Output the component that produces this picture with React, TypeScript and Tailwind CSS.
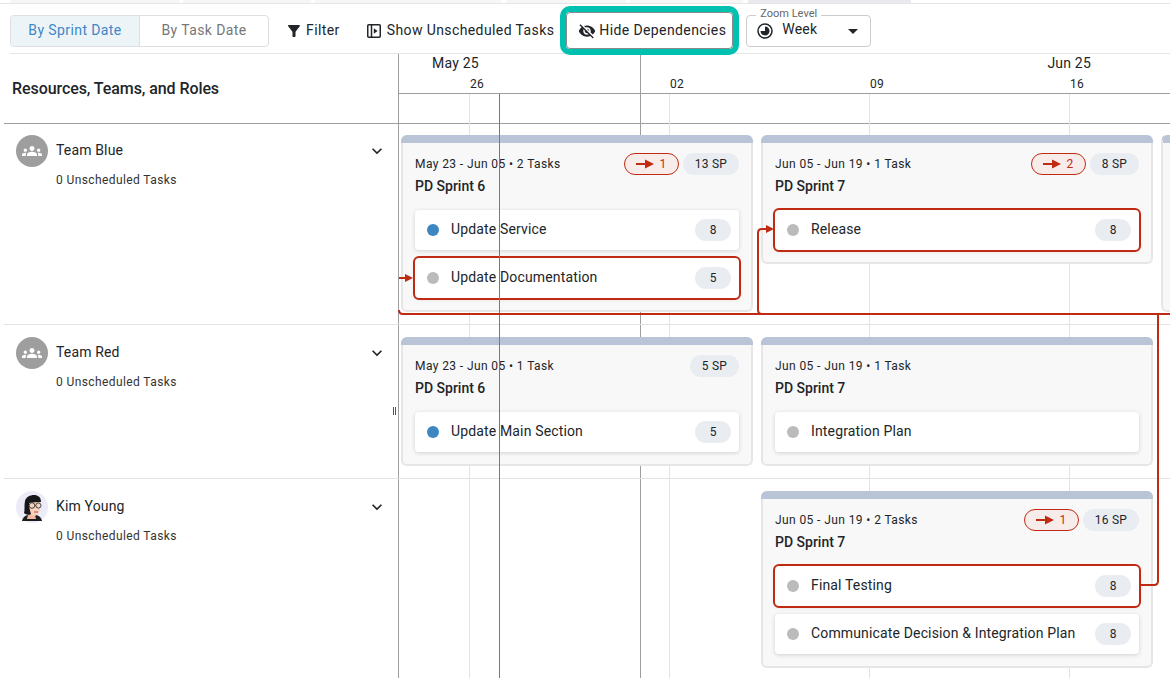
import { MdArrowDropDown, MdExpandMore, MdFilterAlt, MdGroups, MdVisibilityOff } from 'react-icons/md'

type Task = { name: string; points?: number; done?: boolean; linked?: boolean }
type Sprint = { dates: string; name: string; sp?: string; deps?: number; width: string; tasks: Task[] }

function DepArrow() {
    return (
        <svg width="18" height="10" viewBox="0 0 18 10" className="shrink-0">
            <path d="M0 5h10" stroke="#c12a12" strokeWidth="2" />
            <path d="M9 0.500 18 5 9 9.500z" fill="#c12a12" />
        </svg>
    )
}

function SprintCard({ sprint }: { sprint: Sprint }) {
    return (
        <div className={`${sprint.width} shrink-0 rounded-md border-2 border-t-0 border-[#e6e6e6] bg-[#f8f8f8]`}>
            <div className="h-2 -mx-0.5 rounded-t-md bg-[#b9c4d6]" />
            <div className="px-3 pt-2.5 pb-3">
                <div className="flex items-center h-[22px]">
                    <span className="text-xs tracking-[0.4px] text-[#212529]">{sprint.dates}</span>
                    <div className="ml-auto flex gap-1">
                        {sprint.deps && (
                            <span className="flex items-center justify-center gap-[5px] w-[55px] h-[22px] rounded-full border border-[#c12a12] bg-[#f8ecea] text-xs text-[#c12a12]">
                                <DepArrow />
                                {sprint.deps}
                            </span>
                        )}
                        {sprint.sp && (
                            <span className="flex items-center h-[22px] px-3 rounded-full bg-[#e9edf2] text-xs tracking-[0.2px] text-[#212529]">
                                {sprint.sp}
                            </span>
                        )}
                    </div>
                </div>
                <div className="h-5 mt-px mb-[14px] text-sm leading-5 font-medium text-[#212529]">{sprint.name}</div>
                <div className="flex flex-col gap-2">
                    {sprint.tasks.map((t) => (
                        <div
                            key={t.name}
                            className={`flex items-center h-10 pl-3 pr-2 rounded bg-white shadow-[0_1px_4px_rgba(0,0,0,0.16)] ${t.linked ? 'outline-2 outline-[#c12a12]' : ''}`}
                        >
                            <span className={`w-3 h-3 rounded-full ${t.done ? 'bg-[#3c86c2]' : 'bg-[#bbbbbb]'}`} />
                            <span className="ml-3 -mt-0.5 text-sm tracking-[0.15px] text-[#212529]">{t.name}</span>
                            {t.points && (
                                <span className="ml-auto flex items-center justify-center w-9 h-[22px] rounded-full bg-[#e9edf2] text-xs text-[#212529]">
                                    {t.points}
                                </span>
                            )}
                        </div>
                    ))}
                </div>
            </div>
        </div>
    )
}

function TeamAvatar() {
    return (
        <div className="flex items-center justify-center w-8 h-8 rounded-full bg-[#9e9e9e] text-white shrink-0">
            <MdGroups size={20} />
        </div>
    )
}

function KimAvatar() {
    return (
        <svg width="32" height="32" viewBox="0 0 32 32" className="shrink-0">
            <circle cx="16" cy="16" r="16" fill="#ececf8" />
            <path d="M6 32c1-5 6-7 10-7s9 2 10 7z" fill="#1d1d1f" transform="translate(0 -2)" />
            <path d="M12 24h7l1 4h-9z" fill="#eeb9a0" />
            <path d="M11 10h13v8c0 4-3 7-6 7s-7-3-7-7z" fill="#f6d0bb" />
            <path d="M8 22c1-3 0-8 1-12 1-4 5-6 9-6 4 0 7 2 7 7-3 0-9 0-12 1 0 4 1 8 2 11-2 1-5 1-7-1z" fill="#17171a" />
            <circle cx="16" cy="14.500" r="2.800" fill="none" stroke="#444" strokeWidth="1" />
            <circle cx="22.400" cy="14.500" r="2.600" fill="none" stroke="#444" strokeWidth="1" />
            <path d="M18.800 14.500h1" stroke="#444" strokeWidth="1" />
            <path d="M18 21h4" stroke="#b5533f" strokeWidth="1" />
        </svg>
    )
}

function Resource({ name, avatar }: { name: string; avatar: React.ReactNode }) {
    return (
        <div className="flex w-[395px] shrink-0 pl-3 pr-3">
            {avatar}
            <div className="ml-2 flex-1 pt-[5px]">
                <div className="flex items-center justify-between h-5">
                    <span className="text-sm tracking-[0.15px] text-[#212529]">{name}</span>
                    <MdExpandMore size={20} className="text-[#212529] mt-0.5" />
                </div>
                <div className="mt-2.5 text-xs leading-5 tracking-[0.4px] text-[#333]">0 Unscheduled Tasks</div>
            </div>
        </div>
    )
}

const rowOne: Sprint[] = [
    {
        dates: 'May 23 - Jun 05 • 2 Tasks',
        name: 'PD Sprint 6',
        sp: '13 SP',
        deps: 1,
        width: 'w-[352px]',
        tasks: [
            { name: 'Update Service', points: 8, done: true },
            { name: 'Update Documentation', points: 5, linked: true },
        ],
    },
    {
        dates: 'Jun 05 - Jun 19 • 1 Task',
        name: 'PD Sprint 7',
        sp: '8 SP',
        deps: 2,
        width: 'w-[392px]',
        tasks: [{ name: 'Release', points: 8, linked: true }],
    },
]

const rowTwo: Sprint[] = [
    {
        dates: 'May 23 - Jun 05 • 1 Task',
        name: 'PD Sprint 6',
        sp: '5 SP',
        width: 'w-[352px]',
        tasks: [{ name: 'Update Main Section', points: 5, done: true }],
    },
    {
        dates: 'Jun 05 - Jun 19 • 1 Task',
        name: 'PD Sprint 7',
        width: 'w-[392px]',
        tasks: [{ name: 'Integration Plan' }],
    },
]

const rowThree: Sprint = {
    dates: 'Jun 05 - Jun 19 • 2 Tasks',
    name: 'PD Sprint 7',
    sp: '16 SP',
    deps: 1,
    width: 'w-[392px]',
    tasks: [
        { name: 'Final Testing', points: 8, linked: true },
        { name: 'Communicate Decision & Integration Plan', points: 8 },
    ],
}

export default function App() {
    return (
        <div className="relative w-[1170px] h-[678px] overflow-hidden bg-white font-['Roboto',sans-serif] text-[#212529]">
            {/* tab strip cut off by the screenshot */}
            <div className="flex h-1 pl-2.5 border-b border-[#e5e5e5]">
                <div className="w-[170px] bg-[#f6f6f6]" />
                <div className="w-[128px] ml-[3px] bg-[#f6f6f6]" />
                <div className="w-[186px] ml-1 bg-[#f6f6f6]" />
                <div className="w-[120px] ml-[5px] bg-[#f6f6f6]" />
                <div className="w-[113px] ml-1 bg-[#f6f6f6]" />
                <div className="w-[163px] ml-[5px] bg-[#e8eaee]" />
            </div>

            {/* toolbar */}
            <div className="flex items-center h-[50px] pt-1 ml-2.5 border-b border-[#e5e5e5] text-sm tracking-[0.4px]">
                <div className="flex h-8 w-[259px] rounded border border-[#dcdfe3]">
                    <div className="flex items-center justify-center w-[129px] pb-0.5 rounded-l bg-[#edf4f8] border-r border-[#dcdfe3] text-[#3f87c5]">
                        By Sprint Date
                    </div>
                    <div className="flex items-center justify-center flex-1 pb-0.5 text-[#777]">By Task Date</div>
                </div>
                <div className="flex items-center ml-4 gap-[3px]">
                    <MdFilterAlt size={18} />
                    <span className="-mt-0.5">Filter</span>
                </div>
                <div className="flex items-center ml-[27px] gap-1.5">
                    <svg width="14" height="14" viewBox="0 0 14 14">
                        <rect x="0.750" y="0.750" width="12.500" height="12.500" rx="1" fill="none" stroke="#212529" strokeWidth="1.500" />
                        <path d="M4.500 1v12" stroke="#212529" strokeWidth="1.500" />
                        <path d="M6.800 4.200 10.600 7l-3.800 2.800z" fill="#212529" />
                    </svg>
                    <span className="-mt-0.5">Show Unscheduled Tasks</span>
                </div>
                <div className="relative z-30 flex items-center justify-end gap-[3px] pr-1.5 ml-3 w-[167px] h-[37px] -mt-px rounded-sm border border-[#8a8a8a] bg-white outline-[6px] outline-[#00c1b0]">
                    <MdVisibilityOff size={18} className="mt-px" />
                    Hide Dependencies
                </div>
                <div className="relative flex items-center ml-[13px] w-[125px] h-8 pl-2.5 pr-[5px] rounded border border-[#cccccc]">
                    <span className="absolute -top-[9px] left-[9px] px-1 bg-white text-[11px] leading-[14px] tracking-normal text-[#666]">
                        Zoom Level
                    </span>
                    <svg width="16" height="16" viewBox="0 0 16 16">
                        <circle cx="8" cy="8" r="7" fill="none" stroke="#212529" strokeWidth="1.500" />
                        <path d="M8 3.500A4.500 4.500 0 1 1 3.500 8H8z" fill="#212529" />
                    </svg>
                    <span className="ml-[9px] -mt-[3px] tracking-[0.2px]">Week</span>
                    <MdArrowDropDown size={24} className="ml-auto" />
                </div>
            </div>

            {/* column headers */}
            <div className="flex h-[70px] ml-1 border-b border-[#9e9e9e]">
                <div className="flex items-center w-[395px] shrink-0 pl-2 border-r border-[#9e9e9e] text-base font-medium tracking-[-0.08px]">
                    Resources, Teams, and Roles
                </div>
                <div className="w-[771px] h-10 overflow-hidden border-b border-[#9e9e9e]">
                    <div className="flex justify-between pl-[33px] pr-[79px] h-5 -mt-px text-sm leading-5 tracking-[0.2px]">
                        <span>May 25</span>
                        <span>Jun 25</span>
                    </div>
                    <div className="flex pl-[71px] text-xs leading-5 tracking-[0.3px] mt-px">
                        <span className="w-[200px] shrink-0">26</span>
                        <span className="w-[200px] shrink-0">02</span>
                        <span className="w-[200px] shrink-0">09</span>
                        <span className="w-[200px] shrink-0">16</span>
                    </div>
                </div>
            </div>

            {/* grid lines run behind the cards */}
            <div className="absolute left-[469px] top-[94px] bottom-0 w-px bg-[#e3e3e3]" />
            <div className="absolute left-[669px] top-[94px] bottom-0 w-px bg-[#e3e3e3]" />
            <div className="absolute left-[869px] top-[94px] bottom-0 w-px bg-[#e3e3e3]" />
            <div className="absolute left-[1069px] top-[94px] bottom-0 w-px bg-[#e3e3e3]" />
            <div className="absolute left-[640px] top-[54px] bottom-0 w-px bg-[#9e9e9e]" />
            <div className="absolute left-[398px] top-[54px] bottom-0 w-px bg-[#9e9e9e]" />

            {/* rows */}
            <div className="relative ml-1 flex pt-[11px] h-[201px] border-b border-[#e3e3e3]">
                <Resource name="Team Blue" avatar={<TeamAvatar />} />
                <div className="flex items-stretch gap-2 pl-0.5 h-[177px]">
                    <div className="flex gap-2 items-start">
                        {rowOne.map((s) => (
                            <SprintCard key={s.dates} sprint={s} />
                        ))}
                    </div>
                    <div className="w-[40px] shrink-0 rounded-md border-2 border-t-8 border-[#e6e6e6] border-t-[#b9c4d6] bg-[#f8f8f8]" />
                </div>
            </div>
            <div className="relative ml-1 flex pt-3 h-[154px] border-b border-[#e3e3e3]">
                <Resource name="Team Red" avatar={<TeamAvatar />} />
                <div className="flex items-start gap-2 pl-0.5">
                    {rowTwo.map((s) => (
                        <SprintCard key={s.dates} sprint={s} />
                    ))}
                </div>
            </div>
            <div className="relative ml-1 flex pt-3">
                <Resource name="Kim Young" avatar={<KimAvatar />} />
                <div className="pl-[362px]">
                    <SprintCard sprint={rowThree} />
                </div>
            </div>

            {/* column resize handle */}
            <div className="absolute left-[393px] top-[407px] flex gap-px">
                <div className="w-px h-2 bg-[#555]" />
                <div className="w-px h-2 bg-[#555]" />
            </div>

            {/* today marker */}
            <div className="absolute left-[499px] top-[94px] bottom-0 w-px bg-[#e0503f]" />

            {/* dependency connectors */}
            <svg className="absolute inset-0 pointer-events-none" width="1170" height="678" viewBox="0 0 1170 678" fill="none">
                <path d="M399 278h9" stroke="#c12a12" strokeWidth="2" />
                <path d="M405 274 413 278l-8 4z" fill="#c12a12" />
                <path d="M399 310q0 4 4 4H1170" stroke="#c12a12" strokeWidth="2" />
                <path d="M768 229h-6q-4 0-4 4v77q0 4 4 4" stroke="#c12a12" strokeWidth="2" />
                <path d="M766 225 774 229l-8 4z" fill="#c12a12" />
                <path d="M1158 314V581q0 4-4 4h-13" stroke="#c12a12" strokeWidth="2" />
            </svg>
        </div>
    )
}
